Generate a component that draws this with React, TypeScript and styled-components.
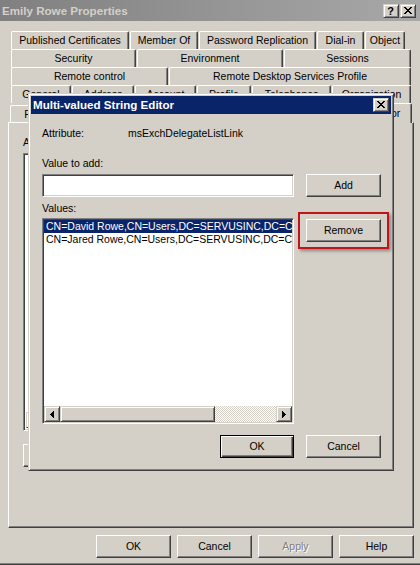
import React from 'react';
import styled, { createGlobalStyle, css } from 'styled-components';

const FACE = '#d4d0c8';
const SHADOW = '#808080';
const DARK = '#404040';
const NAVY = '#0a246a';

const GlobalStyle = createGlobalStyle`
  html, body { margin: 0; padding: 0; background: ${FACE}; }
  body {
    font-family: "Liberation Sans", Arial, sans-serif;
    font-size: 10.5px;
    color: #000;
  }
  *, *::before, *::after { box-sizing: border-box; }
`;

const pushButton = css`
  background: ${FACE};
  border: 1px solid;
  border-color: #fff ${DARK} ${DARK} #fff;
  box-shadow: inset -1px -1px ${SHADOW};
`;

const frameRaised = css`
  background: ${FACE};
  border: 1px solid;
  border-color: ${FACE} ${DARK} ${DARK} ${FACE};
  box-shadow: inset 1px 1px #fff, inset -1px -1px ${SHADOW};
`;

const sunken = css`
  border: 1px solid;
  border-color: ${SHADOW} #fff #fff ${SHADOW};
  box-shadow: inset 1px 1px ${DARK}, inset -1px -1px ${FACE};
`;

/* ---------- window ---------- */

const Window = styled.div`
  position: relative;
  width: 420px;
  height: 565px;
  background: ${FACE};
  display: flex;
  flex-direction: column;
  border-bottom: 1px solid ${DARK};
  box-shadow: inset 0 -1px ${SHADOW};
  overflow: hidden;
`;

const Caption = styled.div<{ $active?: boolean }>`
  flex: none;
  height: ${(p) => (p.$active ? 18 : 21)}px;
  display: flex;
  align-items: flex-start;
  padding: ${(p) => (p.$active ? '0 2px 0 2px' : '0 4px 0 2px')};
  background: ${(p) =>
    p.$active ? NAVY : 'linear-gradient(to right, #808080, #a8a8a8)'};
  color: ${(p) => (p.$active ? '#fff' : FACE)};
  font-weight: bold;
  font-size: 11.6px;
`;

const CaptionText = styled.span<{ $h: number }>`
  flex: 1;
  line-height: ${(p) => p.$h}px;
  white-space: nowrap;
  overflow: hidden;
`;

const CaptionButton = styled.div<{ $top: number; $gap?: number }>`
  flex: none;
  width: 16px;
  height: 14px;
  margin-top: ${(p) => p.$top}px;
  margin-left: ${(p) => p.$gap ?? 0}px;
  ${frameRaised}
  display: flex;
  align-items: center;
  justify-content: center;
  color: #000;
  font-size: 11px;
  font-weight: bold;
  line-height: 12px;
  padding: 0 1px 1px 0;
`;

const CloseGlyph = () => (
  <svg width="8" height="7" viewBox="0 0 8 7" shapeRendering="crispEdges">
    <path
      fill="#000"
      d="M0 0h2v1H0z M6 0h2v1H6z M1 1h2v1H1z M5 1h2v1H5z M2 2h4v1H2z M3 3h2v1H3z M2 4h4v1H2z M1 5h2v1H1z M5 5h2v1H5z M0 6h2v1H0z M6 6h2v1H6z"
    />
  </svg>
);

const ArrowGlyph = ({ dir }: { dir: 'left' | 'right' }) => (
  <svg width="4" height="7" viewBox="0 0 4 7" shapeRendering="crispEdges">
    <path
      fill="#000"
      d={
        dir === 'left'
          ? 'M3 0h1v1h-1z M2 1h2v1h-2z M1 2h3v1h-3z M0 3h4v1h-4z M1 4h3v1h-3z M2 5h2v1h-2z M3 6h1v1h-1z'
          : 'M0 0h1v1h-1z M0 1h2v1h-2z M0 2h3v1h-3z M0 3h4v1h-4z M0 4h3v1h-3z M0 5h2v1h-2z M0 6h1v1h-1z'
      }
    />
  </svg>
);

/* ---------- property sheet ---------- */

const SheetBody = styled.div`
  flex: 1;
  display: flex;
  flex-direction: column;
  padding: 10px 6px 0 8px;
`;

const TabStack = styled.div`
  display: flex;
  flex-direction: column;
`;

const TabRow = styled.div<{ $indent: number }>`
  display: flex;
  gap: 1px;
  padding-left: ${(p) => p.$indent}px;
  align-items: flex-end;
`;

const Tab = styled.div<{ $w: number; $h?: number; $selected?: boolean }>`
  flex: none;
  width: ${(p) => p.$w}px;
  height: ${(p) => p.$h ?? 18}px;
  background: ${FACE};
  border-top: 1px solid #fff;
  border-left: 1px solid #fff;
  border-right: 1px solid ${DARK};
  box-shadow: inset -1px 0 ${SHADOW};
  border-radius: 2px 2px 0 0;
  display: flex;
  align-items: center;
  justify-content: center;
  white-space: nowrap;
  overflow: hidden;
  padding-bottom: 1px;
  ${(p) =>
    p.$selected &&
    css`
      position: relative;
      z-index: 1;
      margin-bottom: -1px;
      padding-bottom: 2px;
    `}
`;

const Panel = styled.div`
  height: 406px;
  border: 1px solid;
  border-color: #fff ${DARK} ${DARK} #fff;
  box-shadow: inset -1px -1px ${SHADOW};
  display: flex;
  flex-direction: column;
  padding: 13px 14px 0 14px;
`;

const Label = styled.div<{ $mt?: number }>`
  line-height: 13px;
  height: 13px;
  margin-top: ${(p) => p.$mt ?? 0}px;
  white-space: nowrap;
`;

const AttrGrid = styled.div`
  margin-top: 4px;
  width: 360px;
  height: 278px;
  background: #fff;
  ${sunken}
  display: flex;
  flex-direction: column;
  justify-content: flex-end;
  padding: 2px;
`;

const ScrollBar = styled.div`
  flex: none;
  height: 16px;
  display: flex;
`;

const ScrollArrow = styled.div`
  flex: none;
  width: 16px;
  height: 16px;
  ${frameRaised}
  display: flex;
  align-items: center;
  justify-content: center;
`;

const ScrollThumb = styled.div<{ $w: number }>`
  flex: none;
  width: ${(p) => p.$w}px;
  height: 16px;
  ${frameRaised}
`;

const ScrollTrack = styled.div`
  flex: 1;
  height: 16px;
  background-color: #fff;
  background-image: conic-gradient(${FACE} 25%, #fff 0 50%, ${FACE} 0 75%, #fff 0);
  background-size: 2px 2px;
`;

const Button = styled.div<{ $w?: number; $default?: boolean; $disabled?: boolean }>`
  flex: none;
  width: ${(p) => p.$w ?? 75}px;
  height: 23px;
  display: flex;
  align-items: center;
  justify-content: center;
  white-space: nowrap;
  padding-bottom: 1px;
  ${(p) =>
    p.$default
      ? css`
          background: ${FACE};
          border: 1px solid #000;
          box-shadow: inset 1px 1px #fff, inset -1px -1px ${DARK}, inset -2px -2px ${SHADOW};
        `
      : pushButton}
  ${(p) =>
    p.$disabled &&
    css`
      color: ${SHADOW};
      text-shadow: 1px 1px #fff;
    `}
`;

const PanelButtons = styled.div`
  display: flex;
  gap: 6px;
  margin-top: 13px;
`;

const SheetButtons = styled.div`
  display: flex;
  justify-content: flex-end;
  gap: 6px;
  margin-top: 7px;
`;

/* ---------- dialog ---------- */

const Dialog = styled.div`
  position: absolute;
  left: 28px;
  top: 93px;
  width: 366px;
  height: 378px;
  ${frameRaised}
  padding: 2px;
  display: flex;
  flex-direction: column;
  z-index: 5;
`;

const DialogBody = styled.div`
  display: flex;
  flex-direction: column;
  padding: 13px 10px 0 11px;
`;

const AttrRow = styled.div`
  display: flex;
  line-height: 13px;
  height: 13px;
  white-space: nowrap;
`;

const AttrName = styled.span`
  width: 86px;
  flex: none;
`;

const EditRow = styled.div<{ $mt: number }>`
  display: flex;
  gap: 12px;
  margin-top: ${(p) => p.$mt}px;
  align-items: flex-start;
`;

const TextBox = styled.div`
  width: 252px;
  height: 23px;
  background: #fff;
  ${sunken}
`;

const ValueList = styled.div`
  width: 252px;
  height: 206px;
  background: #fff;
  ${sunken}
  padding: 1px;
  display: flex;
  flex-direction: column;
`;

const ListItems = styled.div`
  flex: 1;
  overflow: hidden;
`;

const ListItem = styled.div<{ $selected?: boolean }>`
  height: 13px;
  line-height: 13px;
  padding-left: 2px;
  white-space: nowrap;
  overflow: hidden;
  background: ${(p) => (p.$selected ? NAVY : 'transparent')};
  color: ${(p) => (p.$selected ? '#fff' : '#000')};
`;

const SideColumn = styled.div`
  display: flex;
  flex-direction: column;
  padding-top: 1px;
`;

const Highlighted = styled.div`
  position: relative;
`;

const HighlightRing = styled.div`
  position: absolute;
  left: -8px;
  top: -7px;
  right: -8px;
  bottom: -7px;
  border: 2px solid #c3121b;
  box-shadow: 2px 2px 3px rgba(0, 0, 0, 0.35);
  pointer-events: none;
`;

const DialogButtons = styled.div`
  display: flex;
  justify-content: flex-end;
  gap: 12px;
  margin-top: 11px;
`;

export default function App() {
  return (
    <>
      <GlobalStyle />
      <Window>
        <Caption>
          <CaptionText $h={21}>Emily Rowe Properties</CaptionText>
          <CaptionButton $top={4}>?</CaptionButton>
          <CaptionButton $top={4} $gap={1}>
            <CloseGlyph />
          </CaptionButton>
        </Caption>

        <SheetBody>
          <TabStack>
            <TabRow $indent={3}>
              <Tab $w={118}>Published Certificates</Tab>
              <Tab $w={68}>Member Of</Tab>
              <Tab $w={117}>Password Replication</Tab>
              <Tab $w={47}>Dial-in</Tab>
              <Tab $w={40}>Object</Tab>
            </TabRow>
            <TabRow $indent={3}>
              <Tab $w={125}>Security</Tab>
              <Tab $w={146}>Environment</Tab>
              <Tab $w={127}>Sessions</Tab>
            </TabRow>
            <TabRow $indent={3}>
              <Tab $w={157}>Remote control</Tab>
              <Tab $w={242}>Remote Desktop Services Profile</Tab>
            </TabRow>
            <TabRow $indent={3}>
              <Tab $w={60}>General</Tab>
              <Tab $w={62}>Address</Tab>
              <Tab $w={61}>Account</Tab>
              <Tab $w={54}>Profile</Tab>
              <Tab $w={79}>Telephones</Tab>
              <Tab $w={79}>Organization</Tab>
            </TabRow>
            <TabRow $indent={2}>
              <Tab $w={144} $h={17}>Personal Virtual Desktop</Tab>
              <Tab $w={163} $h={17}>COM+</Tab>
              <Tab $w={93} $h={20} $selected>Attribute Editor</Tab>
            </TabRow>
          </TabStack>

          <Panel>
            <Label>Attributes:</Label>
            <AttrGrid>
              <ScrollBar>
                <ScrollArrow>
                  <ArrowGlyph dir="left" />
                </ScrollArrow>
                <ScrollThumb $w={200} />
                <ScrollTrack />
                <ScrollArrow>
                  <ArrowGlyph dir="right" />
                </ScrollArrow>
              </ScrollBar>
            </AttrGrid>
            <PanelButtons>
              <Button>Edit</Button>
              <Button>Filter</Button>
            </PanelButtons>
          </Panel>

          <SheetButtons>
            <Button>OK</Button>
            <Button>Cancel</Button>
            <Button $disabled>Apply</Button>
            <Button>Help</Button>
          </SheetButtons>
        </SheetBody>

        <Dialog>
          <Caption $active>
            <CaptionText $h={18}>Multi-valued String Editor</CaptionText>
            <CaptionButton $top={2}>
              <CloseGlyph />
            </CaptionButton>
          </Caption>
          <DialogBody>
            <AttrRow>
              <AttrName>Attribute:</AttrName>
              <span>msExchDelegateListLink</span>
            </AttrRow>
            <Label $mt={17}>Value to add:</Label>
            <EditRow $mt={4}>
              <TextBox />
              <Button>Add</Button>
            </EditRow>
            <Label $mt={5}>Values:</Label>
            <EditRow $mt={3}>
              <ValueList>
                <ListItems>
                  <ListItem $selected>CN=David Rowe,CN=Users,DC=SERVUSINC,DC=COM</ListItem>
                  <ListItem>CN=Jared Rowe,CN=Users,DC=SERVUSINC,DC=COM</ListItem>
                </ListItems>
                <ScrollBar>
                  <ScrollArrow>
                    <ArrowGlyph dir="left" />
                  </ScrollArrow>
                  <ScrollThumb $w={155} />
                  <ScrollTrack />
                  <ScrollArrow>
                    <ArrowGlyph dir="right" />
                  </ScrollArrow>
                </ScrollBar>
              </ValueList>
              <SideColumn>
                <Highlighted>
                  <Button>Remove</Button>
                  <HighlightRing />
                </Highlighted>
              </SideColumn>
            </EditRow>
            <DialogButtons>
              <Button $w={74} $default>OK</Button>
              <Button>Cancel</Button>
            </DialogButtons>
          </DialogBody>
        </Dialog>
      </Window>
    </>
  );
}
